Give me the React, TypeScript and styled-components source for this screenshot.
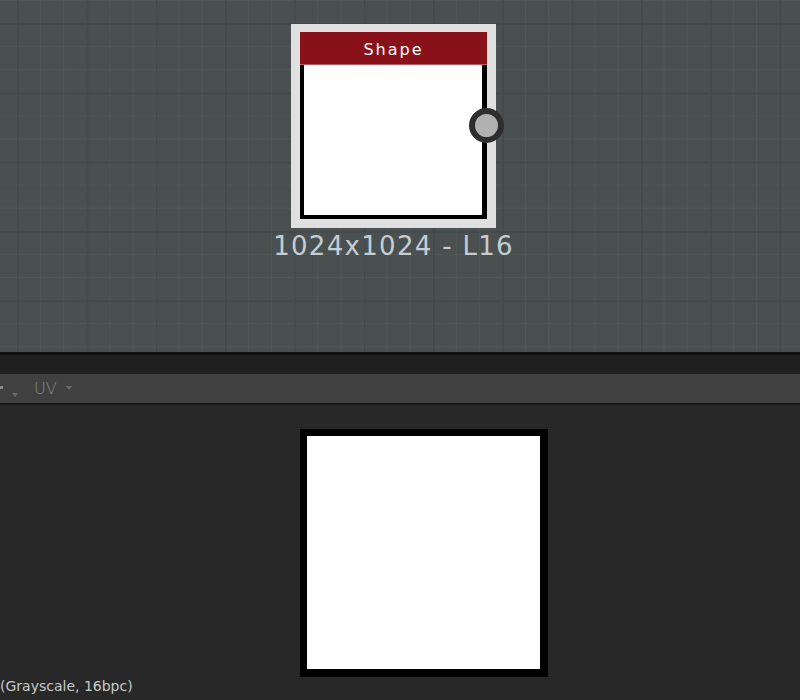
import { createGlobalStyle, styled } from "styled-components";

const GlobalStyle = createGlobalStyle`
  html, body {
    margin: 0;
    padding: 0;
    background: #282828;
    font-family: "DejaVu Sans", "Noto Sans CJK KR", sans-serif;
  }
`;

const Page = styled.div`
  width: 800px;
  height: 700px;
  display: flex;
  flex-direction: column;
  overflow: hidden;
`;

const Canvas = styled.div`
  position: relative;
  height: 352px;
  flex: none;
  background-color: #4a5050;
  background-image:
    linear-gradient(to right, #444949 2px, transparent 2px),
    linear-gradient(to bottom, #444949 2px, transparent 2px),
    linear-gradient(to right, #515757 1px, transparent 1px),
    linear-gradient(to bottom, #515757 1px, transparent 1px);
  background-size: 69.3px 100%, 100% 69.3px, 23.1px 100%, 100% 23.1px;
  background-position: 17px 0, 0 23px, 17px 0, 0 23px;
`;

const Node = styled.div`
  position: absolute;
  left: 291px;
  top: 24px;
  width: 205px;
  display: flex;
  flex-direction: column;
  align-items: center;
`;

const Frame = styled.div`
  position: relative;
  box-sizing: border-box;
  width: 205px;
  height: 204px;
  padding: 8px 9px 9px 9px;
  background: #e0e0e0;
  display: flex;
  flex-direction: column;
`;

const Header = styled.div`
  height: 33px;
  flex: none;
  padding-top: 3px;
  box-sizing: border-box;
  background: #88111a;
  border-bottom: 1px solid #b95a60;
  color: #ffffff;
  font-size: 16px;
  letter-spacing: 2px;
  display: flex;
  align-items: center;
  justify-content: center;
`;

const Body = styled.div`
  flex: 1;
  background: #ffffff;
  border: 4px solid #000000;
  border-top: none;
  border-right-width: 5px;
`;

const Pin = styled.div`
  position: absolute;
  left: 178px;
  top: 84px;
  width: 35px;
  height: 35px;
  box-sizing: border-box;
  border-radius: 50%;
  border: 6px solid #2e2e2e;
  background: #b1b1b1;
`;

const Label = styled.div`
  margin-top: 2px;
  white-space: nowrap;
  font-size: 26px;
  letter-spacing: 1.3px;
  color: #c5ccd3;
  line-height: 32px;
`;

const Divider = styled.div`
  height: 3px;
  flex: none;
  background: #0f0f0f;
`;

const Band = styled.div`
  height: 19px;
  flex: none;
  background: #1f1f1f;
`;

const Toolbar = styled.div`
  height: 29px;
  flex: none;
  background: #404040;
  border-bottom: 2px solid #1a1a1a;
  display: flex;
  align-items: center;
  gap: 6px;
  font-family: "DejaVu Sans", sans-serif;
  font-size: 16px;
  font-weight: 200;
  color: #8a8a8a;
`;

const ToolItem = styled.div<{ $pad?: number }>`
  display: flex;
  align-items: center;
  gap: 9px;
  padding-left: ${(p) => p.$pad ?? 0}px;
`;

const Caret = styled.span<{ $drop?: number }>`
  width: 0;
  height: 0;
  border-left: 3px solid transparent;
  border-right: 3px solid transparent;
  border-top: 4px solid #6a6a6a;
  margin-top: ${(p) => p.$drop ?? 0}px;
`;

const PlusStub = styled.span`
  width: 3px;
  height: 3px;
  background: #8a8a8a;
  margin-top: -2px;
`;

const Viewport = styled.div`
  position: relative;
  flex: 1;
  background: #282828;
  display: flex;
  align-items: center;
  padding-left: 300px;
`;

const Preview = styled.div`
  width: 233px;
  height: 233px;
  margin-top: 1px;
  background: #ffffff;
  border: 7px solid #000000;
  border-right-width: 8px;
  border-bottom-width: 8px;
`;

const Status = styled.div`
  position: absolute;
  left: 0;
  bottom: 6px;
  font-size: 14px;
  color: #c8c8c8;
`;

export default function App() {
  return (
    <Page>
      <GlobalStyle />
      <Canvas>
        <Node>
          <Frame>
            <Header>Shape</Header>
            <Body />
            <Pin />
          </Frame>
          <Label>1024x1024 - L16</Label>
        </Node>
      </Canvas>
      <Divider />
      <Band />
      <Toolbar>
        <ToolItem>
          <PlusStub />
          <Caret $drop={12} />
        </ToolItem>
        <ToolItem $pad={10}>
          UV
          <Caret $drop={-2} />
        </ToolItem>
      </Toolbar>
      <Viewport>
        <Preview />
        <Status>(Grayscale, 16bpc)</Status>
      </Viewport>
    </Page>
  );
}
